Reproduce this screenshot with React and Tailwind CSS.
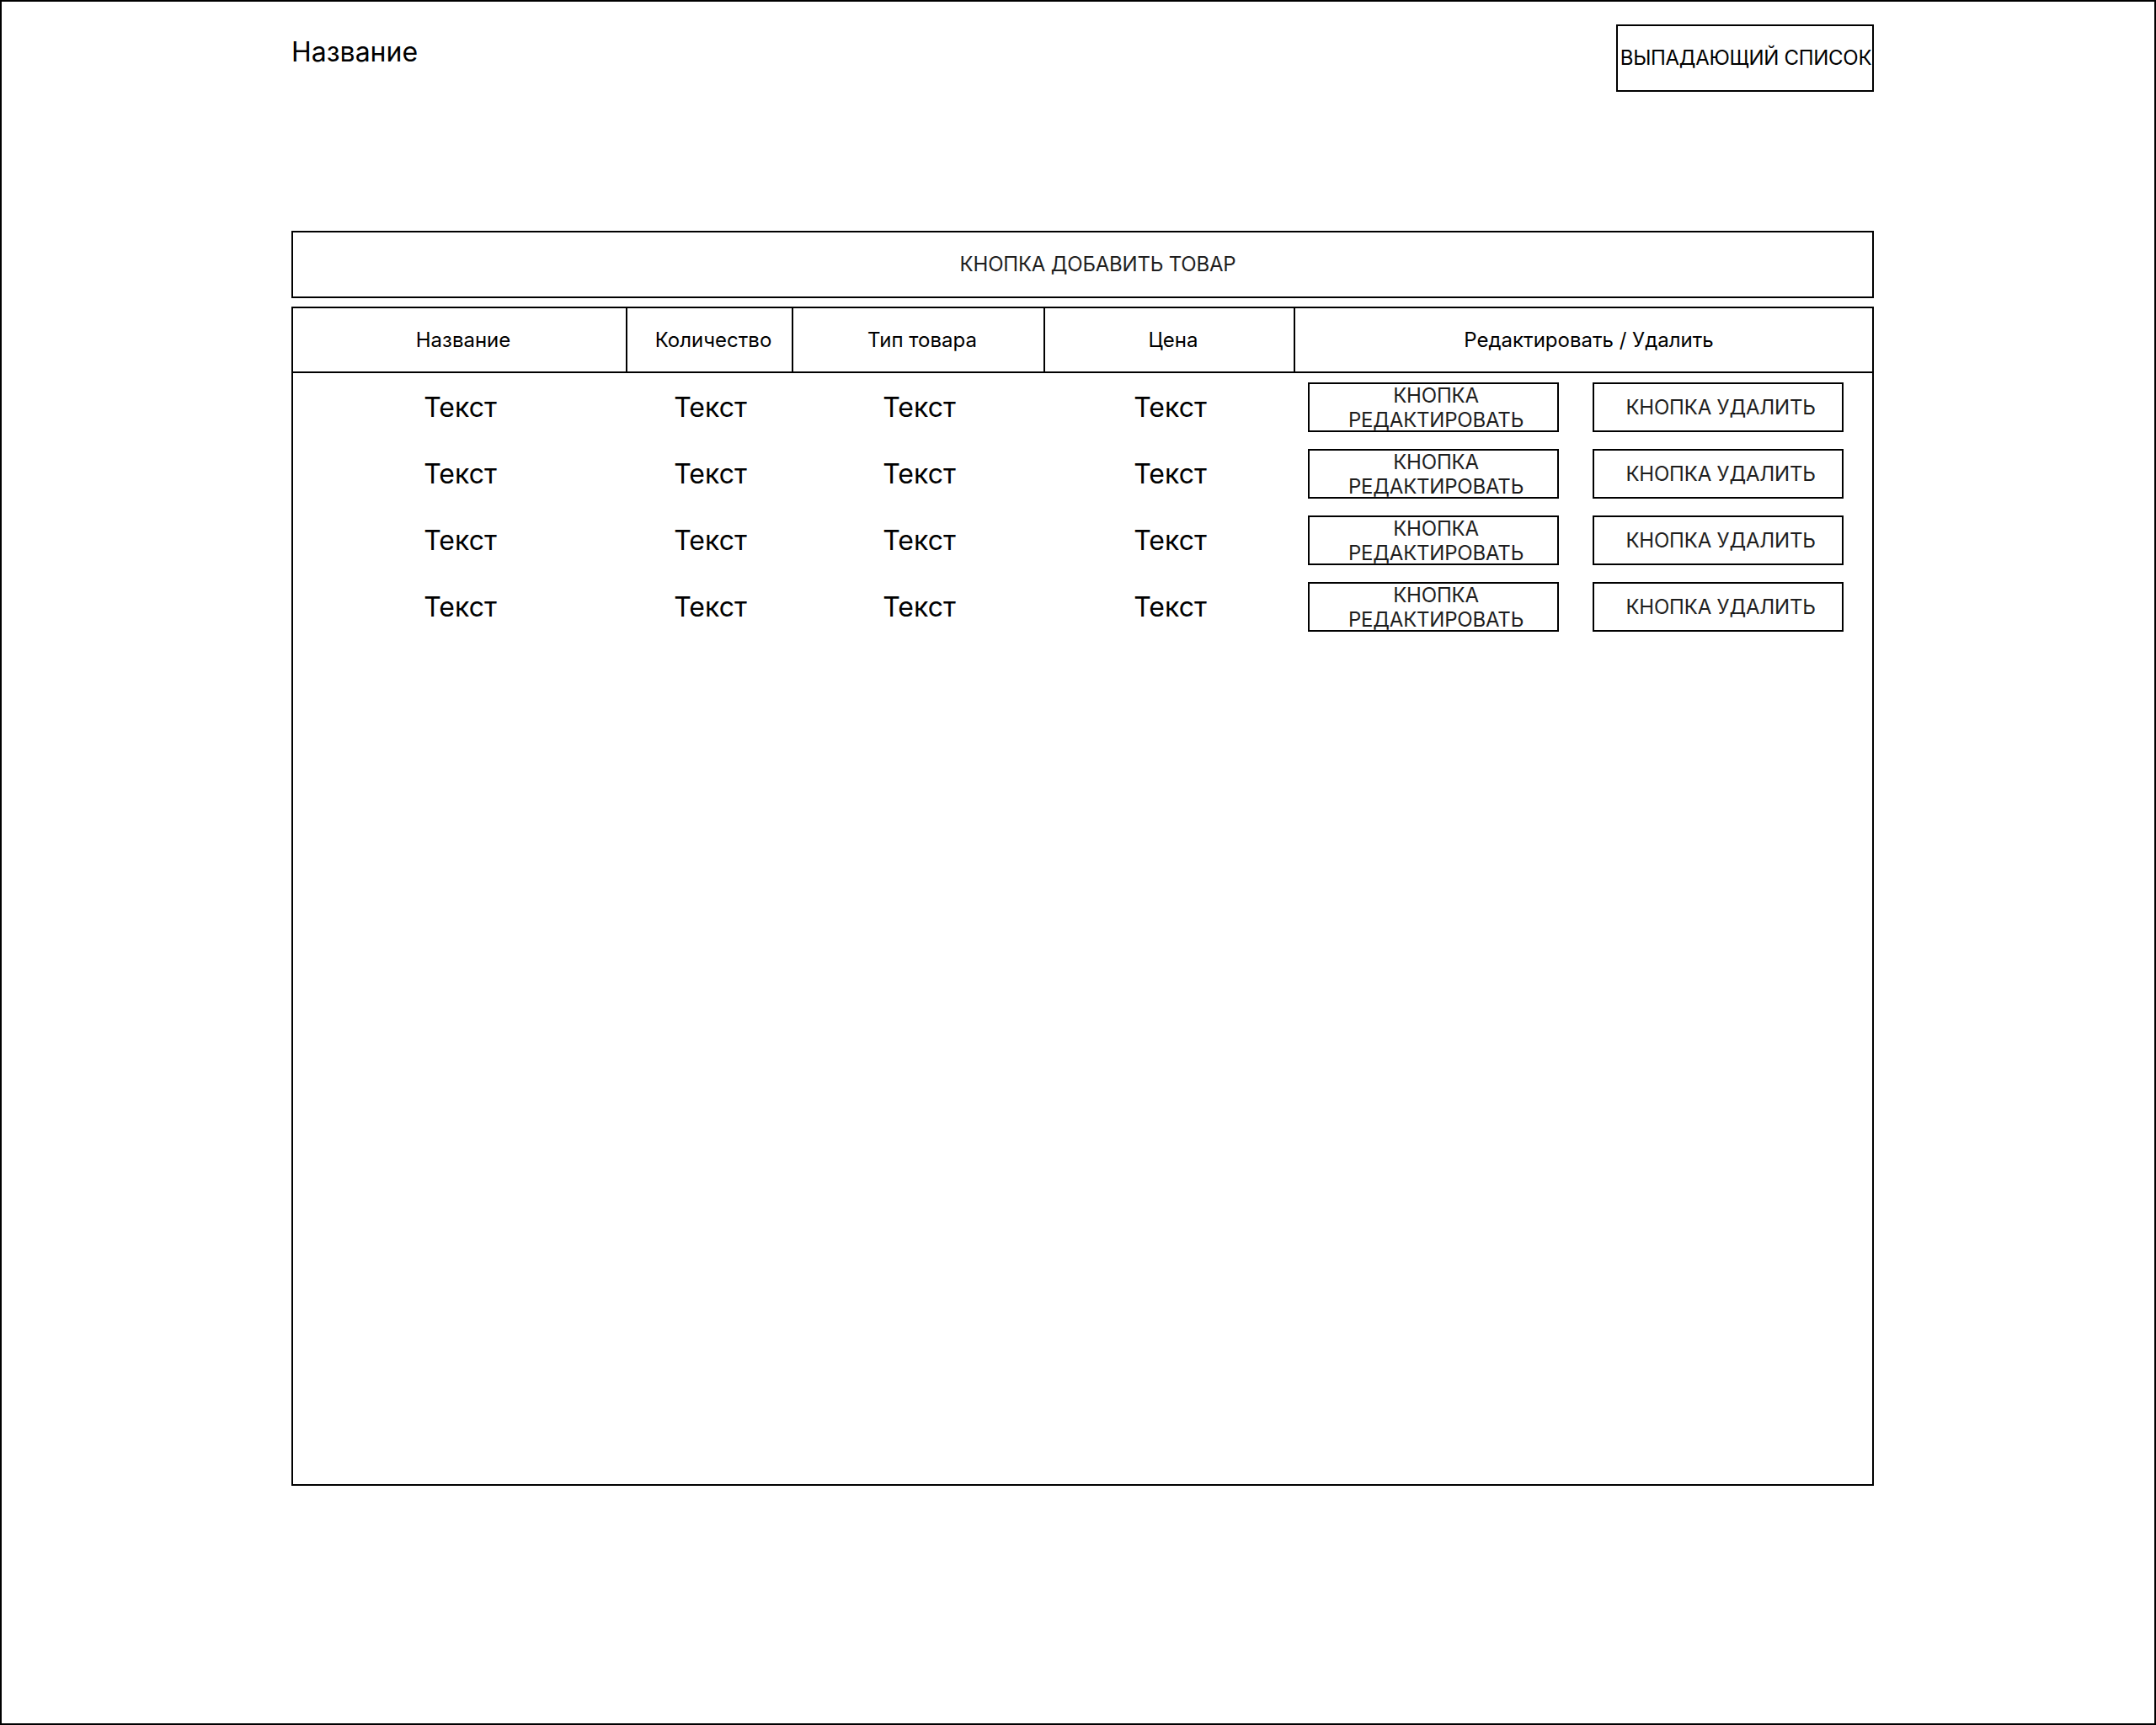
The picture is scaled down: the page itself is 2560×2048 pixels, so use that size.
const ROWS = [1, 2, 3, 4]
const HEAD = ['Название', 'Количество', 'Тип товара', 'Цена']

export default function App() {
  return (
    <div className="w-[2560px] h-[2048px] bg-white border-2 border-black text-black"
      style={{ fontFamily: 'Inter, "Noto Sans", sans-serif' }}>
      <div className="w-[1879px] ml-[344px] pt-[27px]">
        {/* Top bar */}
        <div className="flex justify-between items-start">
          <h1 className="mt-[14px] text-[32px] leading-[38px] font-normal">Название</h1>
          <button className="w-[306px] h-[80px] border-2 border-black flex items-center justify-center pl-[2px] text-[24px] tracking-[-0.3px] whitespace-nowrap">
            ВЫПАДАЮЩИЙ СПИСОК
          </button>
        </div>

        {/* Add button */}
        <button className="mt-[165px] w-full h-[80px] border-2 border-black flex items-center justify-center pl-[36px] text-[24px] tracking-[-0.2px] text-[#1e1e1e]">
          КНОПКА ДОБАВИТЬ ТОВАР
        </button>

        {/* Table */}
        <div className="mt-[10px] h-[1400px] border-2 border-black">
          <div className="grid grid-cols-[397px_197px_299px_297px_1fr] h-[77px] border-b-2 border-black text-[24px]">
            {HEAD.map(h => (
              <div key={h} className="flex items-center justify-center pl-[9px] border-r-2 border-black">{h}</div>
            ))}
            <div className="flex items-center justify-center pl-[12px]">Редактировать / Удалить</div>
          </div>

          <div className="flex flex-col gap-[20px] pt-[11px]">
            {ROWS.map(r => (
              <div key={r} className="grid grid-cols-[397px_197px_299px_297px_1fr] h-[59px]">
                {HEAD.map(h => (
                  <div key={h} className="flex items-center justify-center text-[32px]">Текст</div>
                ))}
                <div className="flex items-center gap-[40px] pl-[15px]">
                  <button className="w-[298px] h-[59px] border-2 border-black flex items-center justify-center pl-[6px] text-center text-[24px] leading-[29px] tracking-[-0.2px] text-[#1e1e1e]">
                    КНОПКА<br />РЕДАКТИРОВАТЬ
                  </button>
                  <button className="w-[298px] h-[59px] border-2 border-black flex items-center justify-center pl-[6px] text-[24px] tracking-[-0.2px] text-[#1e1e1e]">
                    КНОПКА УДАЛИТЬ
                  </button>
                </div>
              </div>
            ))}
          </div>
        </div>
      </div>
    </div>
  )
}
